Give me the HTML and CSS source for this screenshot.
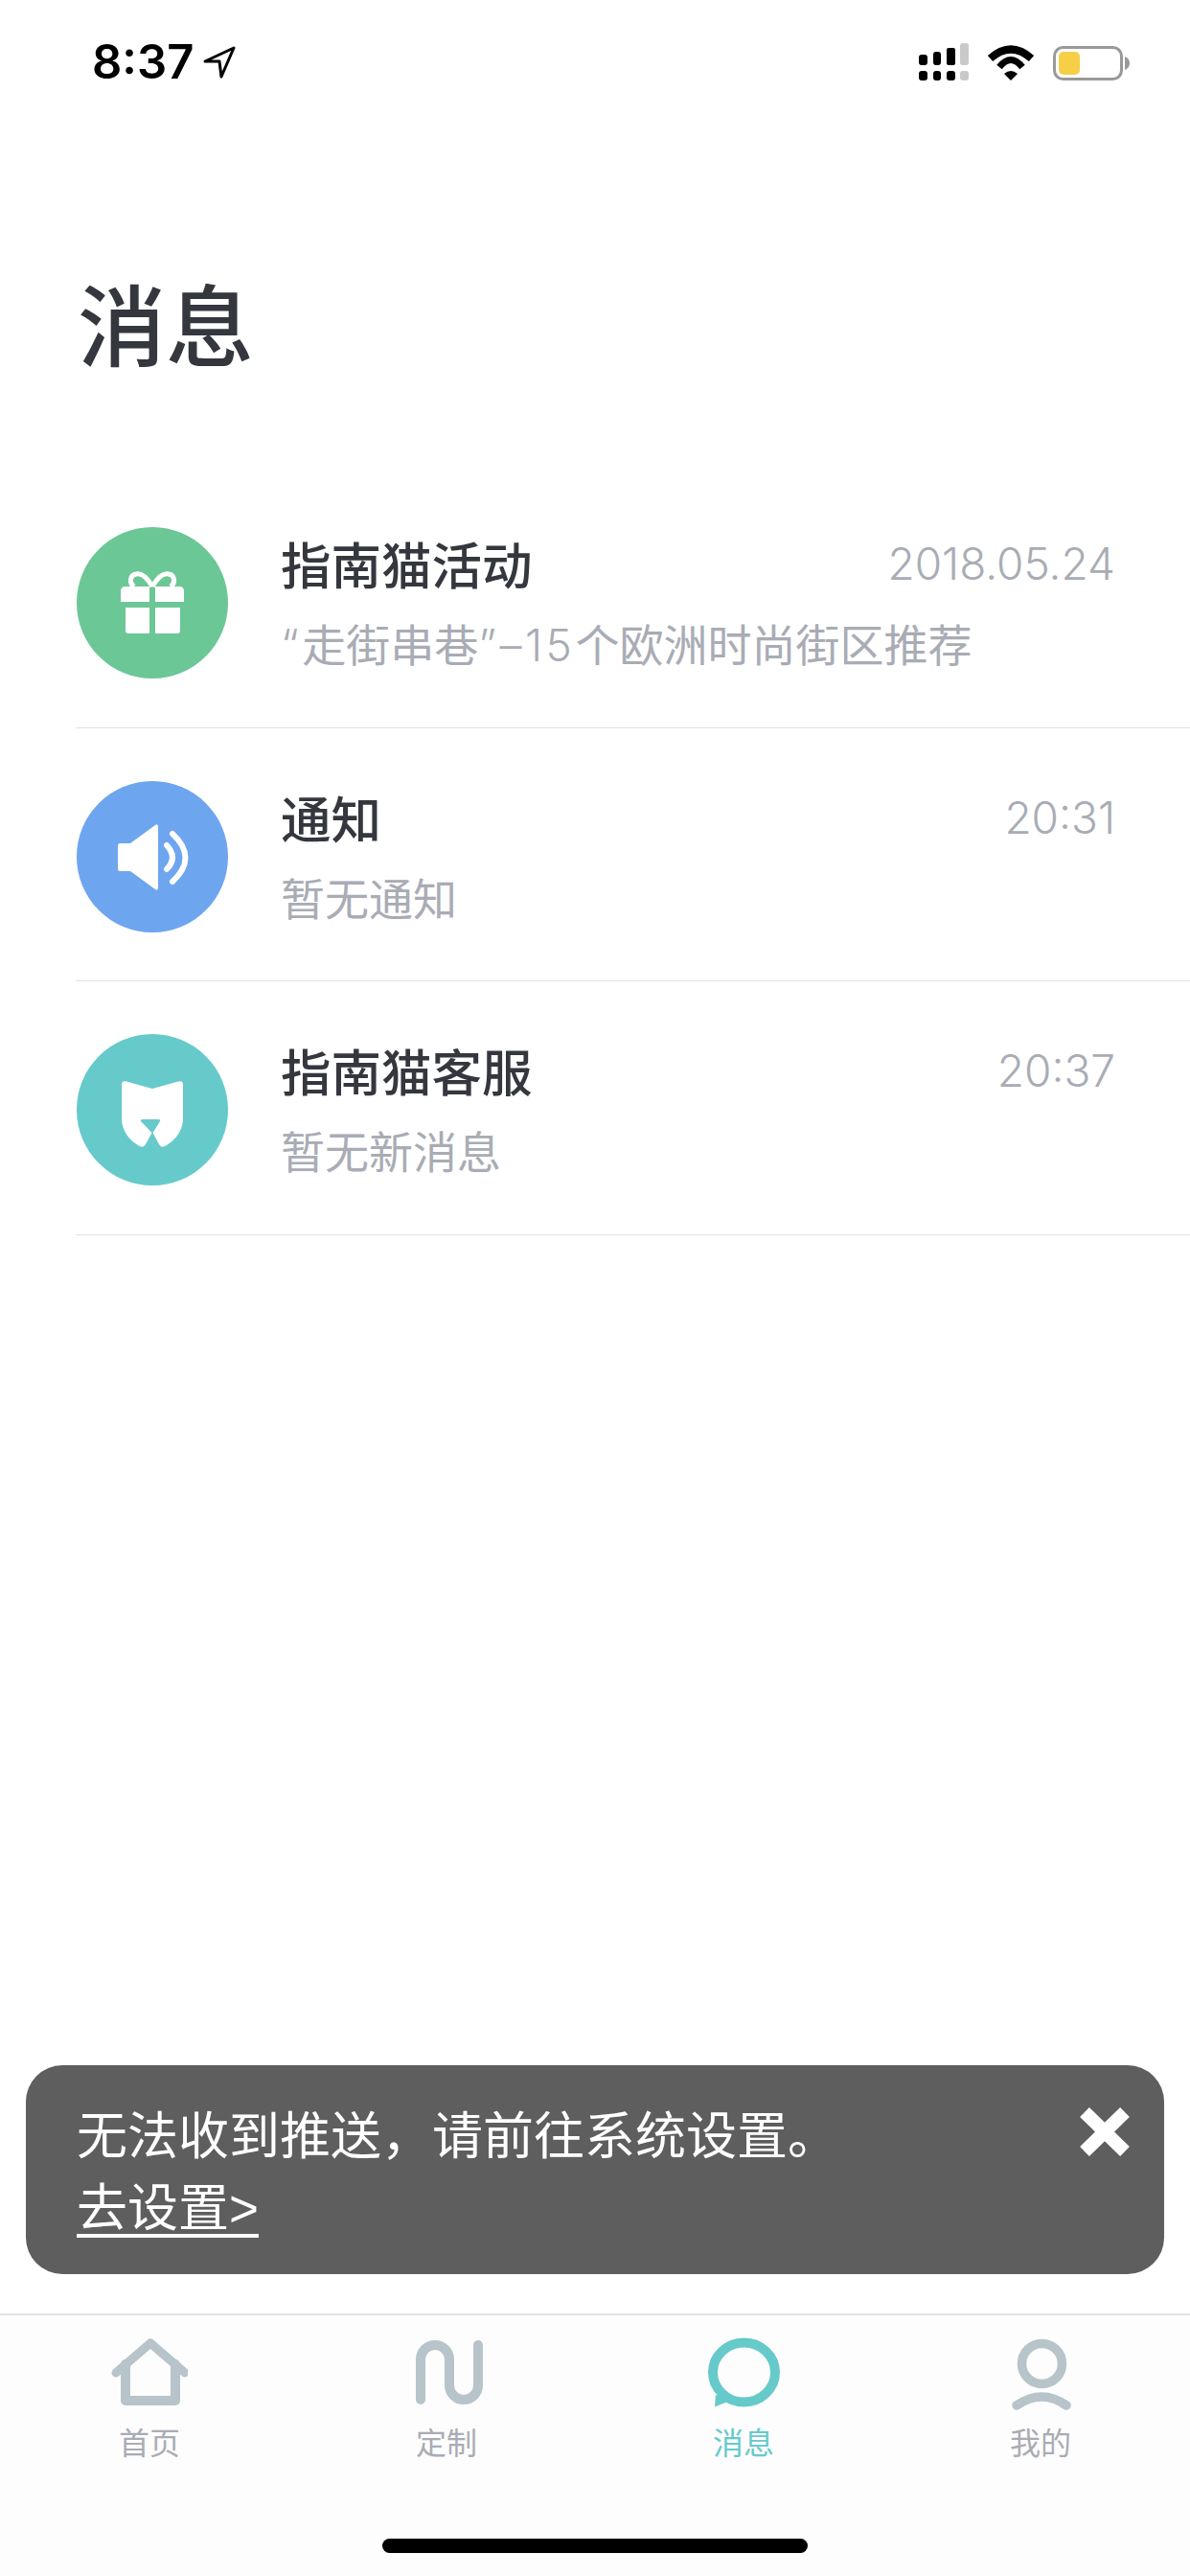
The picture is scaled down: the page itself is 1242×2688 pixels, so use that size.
FILE: index.html
```html
<!DOCTYPE html>
<html lang="zh-CN">
<head>
  <meta charset="UTF-8">
  <meta name="viewport" content="width=device-width, initial-scale=1.0">
  <title>消息</title>
  <link rel="stylesheet" href="styles.css">
</head>
<body>
  <div class="page">

    <!-- status bar -->
    <div class="status-bar">
      <div class="status-left">
        <span class="time">8:37</span>
        <svg class="locate" width="34" height="34" viewBox="0 0 34 34">
          <path d="M2,16 L32,2 L19,32 L17,16 Z" fill="none" stroke="#000" stroke-width="3" stroke-linejoin="round"/>
        </svg>
      </div>
      <div class="status-right">
        <svg width="52" height="39" viewBox="0 0 52 39">
          <rect x="0" y="12" width="9" height="11" rx="3"/>
          <rect x="15" y="9" width="8" height="14" rx="3"/>
          <rect x="29" y="5" width="9" height="18" rx="2"/>
          <rect x="43" y="0" width="9" height="23" rx="3" fill="#c9c9c9"/>
          <rect x="0" y="29" width="9" height="10" rx="3"/>
          <rect x="15" y="29" width="8" height="10" rx="3"/>
          <rect x="29" y="29" width="9" height="10" rx="3"/>
          <rect x="43" y="29" width="9" height="10" rx="3" fill="#c9c9c9"/>
        </svg>
        <svg width="50" height="37" viewBox="0 0 50 37">
          <path d="M3.5,14 Q25,-5 46.5,14" fill="none" stroke="#000" stroke-width="8"/>
          <path d="M13,23 Q25,8 37,23" fill="none" stroke="#000" stroke-width="7"/>
          <path d="M18,30 Q25,24 32,30 L25,37 Z"/>
        </svg>
        <svg width="80" height="36" viewBox="0 0 80 36">
          <rect x="1.5" y="1.5" width="70" height="33" rx="9" fill="none" stroke="#999" stroke-width="3"/>
          <rect x="6" y="6" width="22" height="24" rx="5" fill="#f7cf47"/>
          <path d="M75,11 Q80,13 80,18 Q80,23 75,25 Z" fill="#999"/>
        </svg>
      </div>
    </div>

    <h1 class="page-title">消息</h1>

    <!-- message list -->
    <div class="msg-list">
      <div class="msg-row">
        <div class="avatar avatar-green">
          <svg width="158" height="158" viewBox="0 0 158 158">
            <path d="M79,62 C72,50 66,48 62,49 C56,50 54,58 60,62" fill="none" stroke="#fff" stroke-width="5"/>
            <path d="M79,62 C86,50 92,48 96,49 C102,50 104,58 98,62" fill="none" stroke="#fff" stroke-width="5"/>
            <path d="M46,78 V67 Q46,62 51,62 H76 V78 Z" fill="#fff"/>
            <path d="M82,62 H107 Q112,62 112,67 V78 H82 Z" fill="#fff"/>
            <path d="M51,84 H76 V111 H54 Q51,111 51,108 Z" fill="#fff"/>
            <path d="M82,84 H108 V108 Q108,111 105,111 H82 Z" fill="#fff"/>
          </svg>
        </div>
        <div class="msg-body">
          <div class="msg-top">
            <span class="msg-title">指南猫活动</span>
            <span class="msg-time">2018.05.24</span>
          </div>
          <div class="msg-text"><span class="latin">“</span>走街串巷<span class="latin">”–15</span>个欧洲时尚街区推荐</div>
        </div>
      </div>

      <div class="msg-row">
        <div class="avatar avatar-blue">
          <svg width="158" height="158" viewBox="0 0 158 158">
            <path d="M45,65 H56 L82,46 Q85,44 85,48 V111 Q85,115 82,113 L56,94 H45 Q43,94 43,91 V68 Q43,65 45,65 Z" fill="#fff"/>
            <path d="M94,67 Q106,80 94,92" fill="none" stroke="#fff" stroke-width="6" stroke-linecap="round"/>
            <path d="M100,55 Q127,80 100,105" fill="none" stroke="#fff" stroke-width="6" stroke-linecap="round"/>
          </svg>
        </div>
        <div class="msg-body">
          <div class="msg-top">
            <span class="msg-title">通知</span>
            <span class="msg-time">20:31</span>
          </div>
          <div class="msg-text">暂无通知</div>
        </div>
      </div>

      <div class="msg-row">
        <div class="avatar avatar-teal">
          <svg width="158" height="158" viewBox="0 0 158 158">
            <path d="M47,53 Q47,48 52,49.5 L79,57 L106,49.5 Q111,48 111,53 V88 C111,103 100,113 92,117 Q88,119 86,115 L79.5,103 L87,91 Q88,89 85,89 H69 Q66,89 67,91 L78.5,103 L72,115 Q70,119 66,117 C58,113 47,103 47,88 Z" fill="#fff"/>
          </svg>
        </div>
        <div class="msg-body">
          <div class="msg-top">
            <span class="msg-title">指南猫客服</span>
            <span class="msg-time">20:37</span>
          </div>
          <div class="msg-text">暂无新消息</div>
        </div>
      </div>
    </div>

    <!-- push notice -->
    <div class="notice">
      <div class="notice-text">
        <div>无法收到推送&#xFF0C;请前往系统设置。</div>
        <a class="notice-link">去设置&gt;</a>
      </div>
      <svg class="notice-close" width="54" height="53" viewBox="0 0 54 53">
        <path d="M6,6 L48,47 M48,6 L6,47" stroke="#fff" stroke-width="14" fill="none"/>
      </svg>
    </div>

    <!-- bottom tabs -->
    <div class="tab-bar">
      <div class="tabs">
        <div class="tab">
          <svg width="80" height="78" viewBox="0 0 80 78" fill="none" stroke="#b7c4ca" stroke-linecap="round" stroke-linejoin="round">
            <path d="M5,37 L41,6 L77,37" stroke-width="9"/>
            <path d="M15,28 V66 H67 V28" stroke-width="10"/>
          </svg>
          <span>首页</span>
        </div>
        <div class="tab">
          <svg width="80" height="78" viewBox="0 0 80 78" fill="none" stroke="#b7c4ca" stroke-linecap="round">
            <path d="M13,65 V23 A15,15 0 0 1 43,23 V50 A15,15 0 0 0 73,50 V8" stroke-width="10"/>
          </svg>
          <span>定制</span>
        </div>
        <div class="tab tab-active">
          <svg width="80" height="78" viewBox="0 0 80 78">
            <ellipse cx="40.5" cy="36.5" rx="32.5" ry="31" fill="none" stroke="#66caca" stroke-width="10"/>
            <path d="M11,60 L10,72.5 L26,66 Z" fill="#66caca"/>
          </svg>
          <span>消息</span>
        </div>
        <div class="tab">
          <svg width="80" height="78" viewBox="0 0 80 78" fill="none" stroke="#b7c4ca" stroke-linecap="round">
            <circle cx="41.5" cy="27.5" r="21" stroke-width="9.5"/>
            <path d="M15,71 Q41.5,53 67,71" stroke-width="9.5"/>
          </svg>
          <span>我的</span>
        </div>
      </div>
      <div class="home-bar"></div>
    </div>

  </div>
</body>
</html>
```

FILE: styles.css
```css
* {
  box-sizing: border-box;
}

body {
  margin: 0;
  padding: 0;
  background-color: #fff;
  font-family: "Liberation Sans", "Noto Sans CJK SC", sans-serif;
  color: #35373f;
}

.page {
  display: flex;
  flex-direction: column;
  width: 1242px;
  height: 2688px;
  overflow: hidden;
}

/* status bar */
.status-bar {
  display: flex;
  justify-content: space-between;
  align-items: flex-end;
  height: 84px;
  padding: 0 63px 0 96px;
}

.status-left {
  display: flex;
  align-items: center;
  gap: 10px;
  height: 39px;
}

.time {
  font-family: Inter, sans-serif;
  font-size: 49px;
  font-weight: 600;
  line-height: 39px;
  color: #000;
}

.status-right {
  display: flex;
  align-items: flex-end;
  gap: 19px;
}

.status-right svg {
  display: block;
}

.page-title {
  margin: 0;
  padding: 204px 0 0 81px;
  font-size: 92px;
  font-weight: 500;
  line-height: 110px;
}

/* message list */
.msg-list {
  margin: 97px 0 0 79px;
}

.msg-row {
  display: flex;
  height: 264.5px;
  padding: 55px 78px 0 1px;
  border-bottom: 1px solid #e2e2e4;
}

.avatar {
  flex: none;
  width: 158px;
  height: 158px;
  border-radius: 50%;
}

.avatar svg {
  display: block;
}

.avatar-green {
  background-color: #6cc797;
}

.avatar-blue {
  background-color: #6ea5ef;
}

.avatar-teal {
  background-color: #66caca;
}

.msg-body {
  flex: 1;
  margin-left: 55px;
  padding-top: 6px;
}

.msg-top {
  display: flex;
  justify-content: space-between;
  align-items: flex-start;
  height: 72px;
}

.msg-title {
  font-size: 52.5px;
  font-weight: 500;
  line-height: 72px;
}

.msg-time {
  font-family: Inter, sans-serif;
  font-size: 46px;
  font-weight: 300;
  line-height: 64px;
  color: #a9acb5;
}

.msg-text {
  margin-top: 13px;
  font-family: Inter, "Noto Sans CJK SC", sans-serif;
  font-size: 46px;
  line-height: 64px;
  color: #a9acb5;
}

.latin {
  font-weight: 300;
  letter-spacing: 3.5px;
}

/* push notice */
.notice {
  display: flex;
  justify-content: space-between;
  align-items: flex-start;
  height: 218px;
  margin: auto 27px 41px;
  padding: 37px 35px 0 53px;
  background-color: #5e5e5e;
  border-radius: 38px;
  color: #fff;
}

.notice-text {
  font-size: 53px;
  line-height: 75px;
}

.notice-link {
  text-decoration: underline;
  text-decoration-thickness: 4px;
  text-underline-offset: 8px;
}

.notice-close {
  margin-top: 6px;
}

/* bottom tabs */
.tab-bar {
  height: 274px;
  padding-top: 23px;
  background-color: #fdfdfd;
  border-top: 2px solid #e4e4e4;
}

.tabs {
  display: grid;
  grid-template-columns: repeat(4, 310px);
  padding-left: 1px;
}

.tab {
  display: flex;
  flex-direction: column;
  align-items: center;
  font-size: 32px;
  line-height: 40px;
  color: #a9acb5;
}

.tab span {
  margin-top: 13px;
}

.tab-active {
  color: #66caca;
}

.home-bar {
  width: 444px;
  height: 15px;
  margin: 79px auto 0;
  background-color: #000;
  border-radius: 8px;
}
```
